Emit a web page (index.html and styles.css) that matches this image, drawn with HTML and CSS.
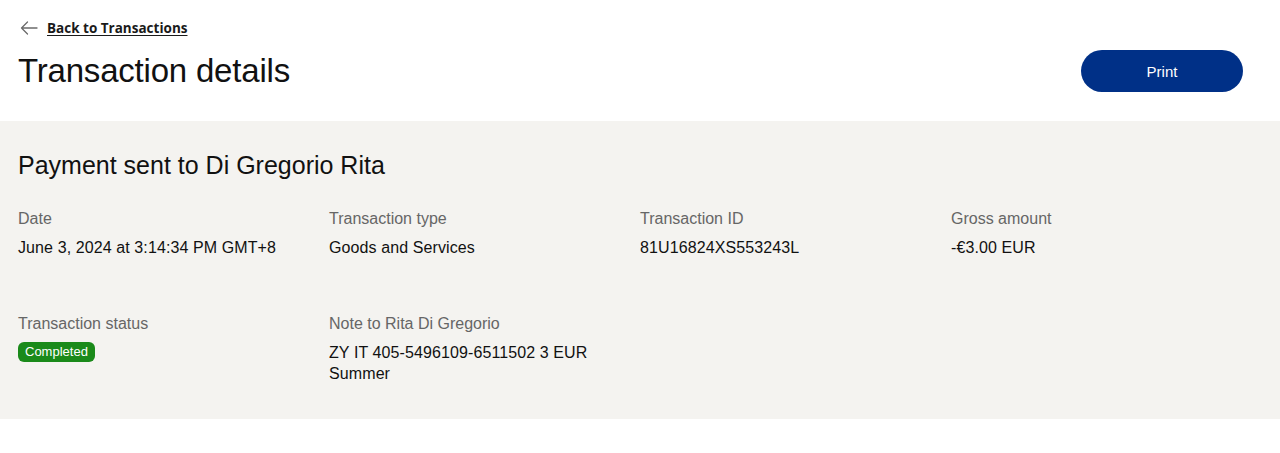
FILE: index.html
```html
<!DOCTYPE html>
<html lang="en">
<head>
<meta charset="utf-8">
<title>Transaction details</title>
<link rel="stylesheet" href="styles.css">
</head>
<body>
<header class="top">
  <div class="top-left">
    <a class="back" href="#">
      <svg class="back-icon" width="18" height="14" viewBox="0 0 18 14" aria-hidden="true">
        <path d="M17 7H1.5M7.5 1L1.5 7l6 6" fill="none" stroke="#6b6b6b" stroke-width="1.3" stroke-linecap="round" stroke-linejoin="round"/>
      </svg>
      <span class="back-text">Back to Transactions</span>
    </a>
    <h1 class="title">Transaction details</h1>
  </div>
  <button class="print">Print</button>
</header>
<section class="details">
  <h2 class="heading">Payment sent to Di Gregorio Rita</h2>
  <div class="grid">
    <div class="field">
      <div class="label">Date</div>
      <div class="value">June 3, 2024 at 3:14:34 PM GMT+8</div>
    </div>
    <div class="field">
      <div class="label">Transaction type</div>
      <div class="value">Goods and Services</div>
    </div>
    <div class="field">
      <div class="label">Transaction ID</div>
      <div class="value">81U16824XS553243L</div>
    </div>
    <div class="field">
      <div class="label">Gross amount</div>
      <div class="value">-€3.00 EUR</div>
    </div>
    <div class="field">
      <div class="label">Transaction status</div>
      <div class="status"><span class="badge">Completed</span></div>
    </div>
    <div class="field">
      <div class="label">Note to Rita Di Gregorio</div>
      <div class="value">ZY IT 405-5496109-6511502 3 EUR<br>Summer</div>
    </div>
  </div>
</section>
</body>
</html>
```

FILE: styles.css
```css
* { box-sizing: border-box; }
html, body { margin: 0; padding: 0; background: #fff; }
body {
  font-family: "Liberation Sans", Arial, sans-serif;
  color: #111;
}
.top {
  display: flex;
  justify-content: space-between;
  align-items: flex-start;
  height: 121px;
  padding: 18px 37px 0 18px;
}
.top-left { display: flex; flex-direction: column; }
.back {
  display: flex;
  align-items: center;
  height: 20px;
  color: #1a1a1a;
  text-decoration: none;
}
.back-icon { margin-left: 2px; margin-right: 9px; }
.back-text {
  font-family: "Open Sans", "DejaVu Sans", sans-serif;
  font-weight: 700;
  font-size: 13.5px;
  text-decoration: underline;
  text-underline-offset: 2px;
}
.title {
  margin: 14px 0 0;
  font-size: 33px;
  font-weight: 400;
  line-height: 38px;
  letter-spacing: -0.2px;
  color: #111;
}
.print {
  margin-top: 32px;
  width: 162px;
  height: 42px;
  border: none;
  border-radius: 21px;
  background: #003087;
  color: #fff;
  font-family: "Liberation Sans", Arial, sans-serif;
  font-size: 15px;
  cursor: pointer;
}
.details {
  background: #f4f3f0;
  padding: 29px 18px 35px;
}
.heading {
  margin: 0 0 28px;
  font-size: 25px;
  font-weight: 400;
  line-height: 30px;
  color: #111;
}
.grid {
  display: grid;
  grid-template-columns: repeat(4, 1fr);
  row-gap: 55px;
}
.label {
  font-size: 16px;
  line-height: 21px;
  color: #666;
  margin-bottom: 8px;
}
.value {
  font-size: 16px;
  line-height: 21px;
  letter-spacing: 0.1px;
  color: #111;
}
.status { display: flex; }
.badge {
  display: inline-block;
  height: 20px;
  line-height: 20px;
  padding: 0 7px;
  border-radius: 6px;
  background: #1a8a1a;
  color: #fff;
  font-size: 13px;
}
```
